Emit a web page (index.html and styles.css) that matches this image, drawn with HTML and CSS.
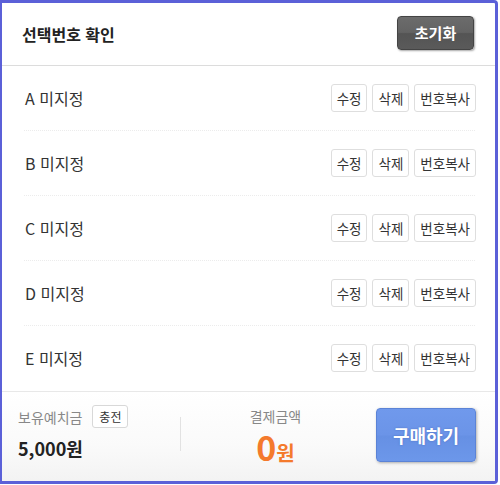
FILE: index.html
```html
<!DOCTYPE html>
<html lang="ko">
<head>
<meta charset="utf-8">
<link rel="stylesheet" href="styles.css">
</head>
<body>
<div class="frame">
  <div class="header">
    <h1 class="title">선택번호 확인</h1>
    <button class="btn-reset">초기화</button>
  </div>
  <ul class="list">
    <li class="row"><span class="label">A 미지정</span><span class="actions"><button class="sbtn">수정</button><button class="sbtn">삭제</button><button class="sbtn">번호복사</button></span></li>
    <li class="row"><span class="label">B 미지정</span><span class="actions"><button class="sbtn">수정</button><button class="sbtn">삭제</button><button class="sbtn">번호복사</button></span></li>
    <li class="row"><span class="label">C 미지정</span><span class="actions"><button class="sbtn">수정</button><button class="sbtn">삭제</button><button class="sbtn">번호복사</button></span></li>
    <li class="row"><span class="label">D 미지정</span><span class="actions"><button class="sbtn">수정</button><button class="sbtn">삭제</button><button class="sbtn">번호복사</button></span></li>
    <li class="row"><span class="label">E 미지정</span><span class="actions"><button class="sbtn">수정</button><button class="sbtn">삭제</button><button class="sbtn">번호복사</button></span></li>
  </ul>
  <div class="footer">
    <div class="deposit">
      <div class="deposit-top"><span class="flabel">보유예치금</span><button class="btn-charge">충전</button></div>
      <div class="deposit-amount">5,000원</div>
    </div>
    <div class="divider"></div>
    <div class="pay">
      <div class="flabel">결제금액</div>
      <div class="pay-amount"><span class="num">0</span><span class="unit">원</span></div>
    </div>
    <button class="btn-buy">구매하기</button>
  </div>
</div>
</body>
</html>
```

FILE: styles.css
```css
* { box-sizing: border-box; }
html, body { margin: 0; padding: 0; background: #fff; }
body {
  font-family: "Noto Sans CJK KR", "Noto Sans", sans-serif;
  width: 500px;
  height: 485px;
  overflow: hidden;
}
.frame {
  width: 498px;
  height: 484px;
  border: 3px solid #5b60d8;
  border-left-width: 2px;
  border-radius: 0 4px 4px 0;
  background: #fff;
  display: flex;
  flex-direction: column;
}
.header {
  height: 63px;
  flex: none;
  display: flex;
  align-items: center;
  justify-content: space-between;
  padding: 0 21px 0 20px;
  border-bottom: 1px solid #dcdcdc;
}
.title {
  margin: 0;
  font-size: 16px;
  font-weight: 700;
  color: #222;
}
.btn-reset {
  width: 77px;
  height: 34px;
  margin-top: -3px;
  border: 1px solid #444;
  border-radius: 4px;
  background: linear-gradient(#6c6c6c 0%, #636363 48%, #545454 52%, #5a5a5a 100%);
  color: #fff;
  font-family: inherit;
  font-size: 15px;
  font-weight: 700;
  box-shadow: 1px 1px 2px rgba(0,0,0,0.35);
  padding: 0;
}
.list {
  list-style: none;
  margin: 0;
  padding: 0;
  flex: none;
}
.row {
  height: 65px;
  margin: 0 20px 0 22px;
  display: flex;
  align-items: center;
  justify-content: space-between;
  border-bottom: 1px dotted #ececec;
}
.row:last-child { border-bottom-color: transparent; }
.label {
  font-size: 16px;
  color: #333;
  padding-left: 1px;
}
.actions { display: flex; gap: 5px; margin-right: -1px; }
.sbtn {
  height: 28px;
  padding: 0 5px;
  border: 1px solid #dedede;
  border-radius: 3px;
  background: #fff;
  font-family: inherit;
  font-size: 13.5px;
  color: #333;
}
.footer {
  flex: 1;
  border-top: 1px solid #e8e8e8;
  background: linear-gradient(#fff 0%, #fafafa 60%, #f3f3f3 100%);
  display: flex;
  align-items: flex-start;
  padding: 13px 19px 0 16px;
}
.deposit { width: 162px; }
.deposit-top { display: flex; align-items: center; gap: 10px; height: 23px; }
.flabel { font-size: 14px; color: #888; }
.btn-charge {
  height: 23px;
  width: 36px;
  padding: 0;
  border: 1px solid #d8d8d8;
  border-radius: 3px;
  background: #fff;
  font-family: inherit;
  font-size: 12px;
  color: #333;
}
.deposit-amount {
  margin-top: 8px;
  font-size: 18px;
  font-weight: 700;
  color: #222;
  line-height: 24px;
}
.divider {
  width: 1px;
  height: 34px;
  margin-top: 12px;
  background: #e2e2e2;
}
.pay {
  flex: 1;
  text-align: center;
  padding-top: 2px;
  padding-right: 6px;
}
.pay .flabel { line-height: 18px; display: block; }
.pay-amount {
  color: #f47a2c;
  font-weight: 700;
  line-height: 40px;
  margin-top: 2px;
}
.pay-amount .num { font-size: 34px; }
.pay-amount .unit { font-size: 20px; }
.btn-buy {
  width: 100px;
  height: 54px;
  margin-top: 3px;
  border: 1px solid #5b83d6;
  border-radius: 4px;
  background: linear-gradient(#7099ec 0%, #6b94e8 50%, #6690e4 52%, #6c97ea 100%);
  color: #fff;
  font-family: inherit;
  font-size: 18px;
  font-weight: 700;
  text-shadow: 0 0 2px rgba(40,60,140,0.4);
  box-shadow: 1px 1px 3px rgba(0,0,0,0.3);
  padding: 0;
}
```
